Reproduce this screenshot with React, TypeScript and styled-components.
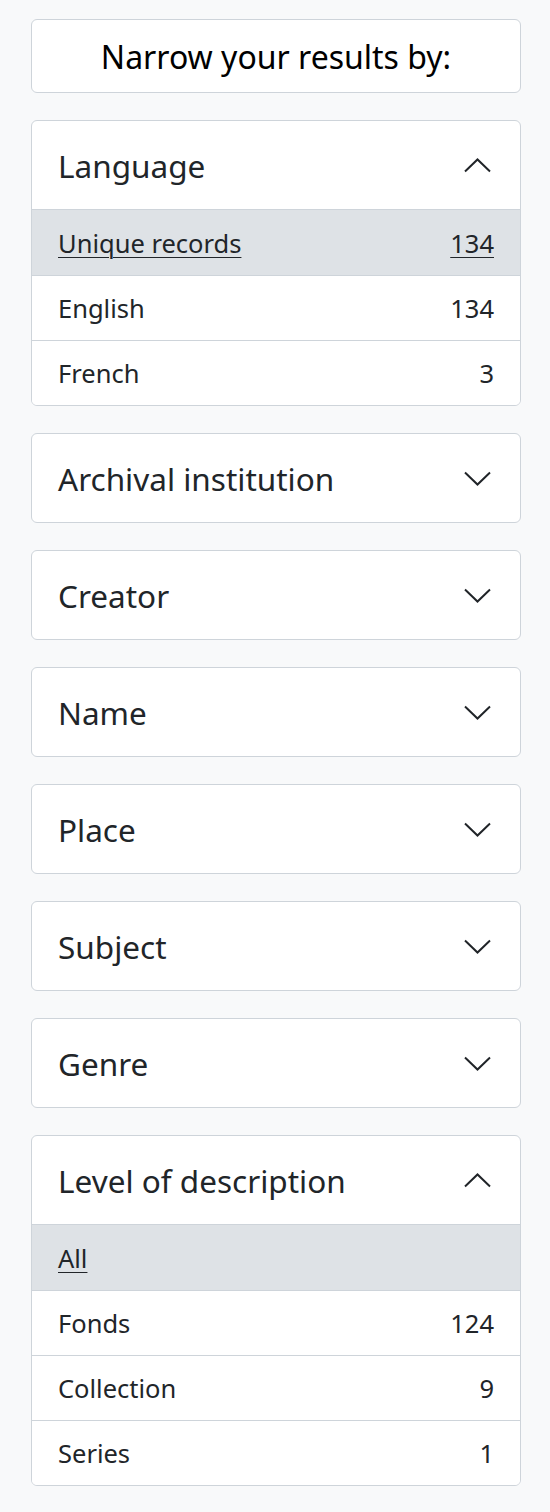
import styled, { createGlobalStyle } from "styled-components"

const GlobalStyle = createGlobalStyle`
  body {
    margin: 0;
    background: #f8f9fa;
    font-family: "Noto Sans", "Open Sans", sans-serif;
    color: #212529;
  }
`

type FacetRow = { label: string; count?: number; active?: boolean }
type Facet = { title: string; open?: boolean; rows?: FacetRow[] }

const facets: Facet[] = [
  {
    title: "Language",
    open: true,
    rows: [
      { label: "Unique records", count: 134, active: true },
      { label: "English", count: 134 },
      { label: "French", count: 3 },
    ],
  },
  { title: "Archival institution" },
  { title: "Creator" },
  { title: "Name" },
  { title: "Place" },
  { title: "Subject" },
  { title: "Genre" },
  {
    title: "Level of description",
    open: true,
    rows: [
      { label: "All", active: true },
      { label: "Fonds", count: 124 },
      { label: "Collection", count: 9 },
      { label: "Series", count: 1 },
    ],
  },
]

function Chevron({ up }: { up?: boolean }) {
  return (
    <ChevronSvg width="27" height="15" viewBox="0 0 27 15" fill="none">
      <path
        d={up ? "M1 13.5L13.5 1.5L26 13.5" : "M1 1.5L13.5 13.5L26 1.5"}
        stroke="#212529"
        strokeWidth="2"
      />
    </ChevronSvg>
  )
}

export default function App() {
  return (
    <>
      <GlobalStyle />
      <Sidebar>
        <Heading>Narrow your results by:</Heading>
        {facets.map((f) => (
          <Card key={f.title}>
            <CardHeader $open={f.open}>
              <Title>{f.title}</Title>
              <Chevron up={f.open} />
            </CardHeader>
            {f.open &&
              f.rows?.map((r) => (
                <Row key={r.label} $active={r.active}>
                  <span>{r.label}</span>
                  {r.count !== undefined && <span>{r.count}</span>}
                </Row>
              ))}
          </Card>
        ))}
      </Sidebar>
    </>
  )
}

const Sidebar = styled.aside`
  display: flex;
  flex-direction: column;
  gap: 27px;
  padding: 19px 29px 28px 31px;
`

const Heading = styled.h2`
  margin: 0;
  background: #fff;
  border: 1px solid #ced4da;
  border-radius: 6px;
  height: 74px;
  box-sizing: border-box;
  display: flex;
  align-items: center;
  justify-content: center;
  font-size: 32px;
  font-weight: 400;
  color: #000;
`

const Card = styled.section`
  background: #fff;
  border: 1px solid #ced4da;
  border-radius: 6px;
  overflow: hidden;
`

const CardHeader = styled.div<{ $open?: boolean }>`
  display: flex;
  align-items: center;
  justify-content: space-between;
  height: ${(p) => (p.$open ? 89 : 88)}px;
  box-sizing: border-box;
  padding: 0 29px 0 26px;
  border-bottom: ${(p) => (p.$open ? "1px solid #ced4da" : "none")};
`

const Title = styled.h3`
  margin: 0;
  font-size: 31.5px;
  font-weight: 400;
`

const ChevronSvg = styled.svg`
  display: block;
`

const Row = styled.div<{ $active?: boolean }>`
  display: flex;
  justify-content: space-between;
  align-items: center;
  height: 65px;
  box-sizing: border-box;
  padding: 0 26px;
  font-size: 25.5px;
  background: ${(p) => (p.$active ? "#dee2e6" : "#fff")};
  text-decoration: ${(p) => (p.$active ? "underline" : "none")};
  text-underline-offset: 4px;
  text-decoration-thickness: 1px;

  & + & {
    border-top: 1px solid #ced4da;
  }
`
